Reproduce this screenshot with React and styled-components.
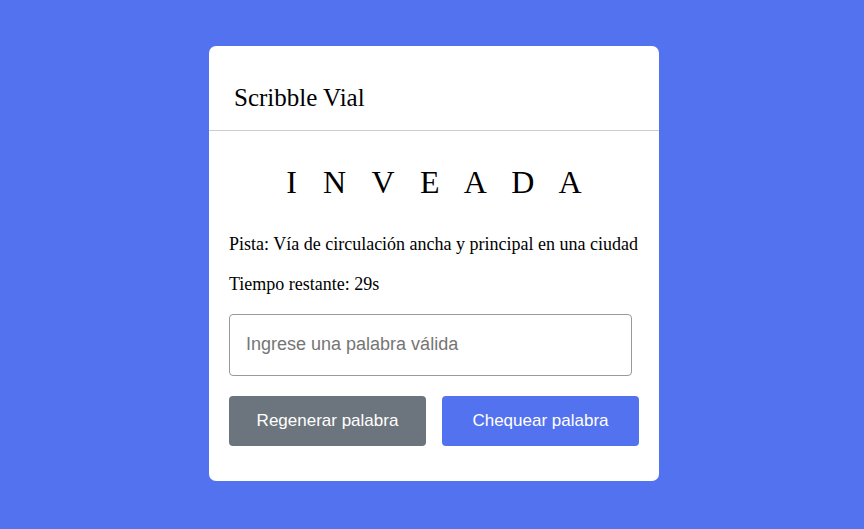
import React, { useState } from 'react';
import styled, { createGlobalStyle } from 'styled-components';

const GlobalStyle = createGlobalStyle`
  * {
    box-sizing: border-box;
  }
  body {
    margin: 0;
    background: #5372f0;
    font-family: 'Liberation Serif', 'Times New Roman', serif;
    line-height: 1.5;
    color: #000;
  }
`;

const Page = styled.div`
  display: flex;
  justify-content: center;
  align-items: flex-start;
  min-height: 529px;
  padding: 46px 0 0 4px;
`;

const Card = styled.div`
  width: 450px;
  background: #fff;
  border-radius: 7px;
`;

const Header = styled.header`
  padding: 33px 25px 13px;
  border-bottom: 1px solid #ccc;
`;

const Title = styled.h2`
  margin: 0;
  font-size: 25px;
  font-weight: 400;
`;

const Body = styled.div`
  padding: 27px 20px 35px;
`;

const Word = styled.p`
  margin: 0 0 25px;
  text-align: center;
  font-size: 32px;
  letter-spacing: 9px;
  padding-left: 9px;
`;

const Detail = styled.p`
  margin: 0 0 13px;
  font-size: 18px;
`;

const Input = styled.input`
  display: block;
  width: 403px;
  height: 62px;
  margin-top: 16px;
  padding: 0 16px;
  border: 1px solid #999;
  border-radius: 4px;
  font-family: 'Liberation Sans', Arial, sans-serif;
  font-size: 18px;
  outline: none;
  &::placeholder {
    color: #757575;
  }
`;

const Buttons = styled.div`
  display: grid;
  grid-template-columns: 1fr 1fr;
  gap: 16px;
  margin-top: 20px;
`;

const Button = styled.button`
  height: 50px;
  border: none;
  border-radius: 4px;
  background: ${({ $variant }) => ($variant === 'primary' ? '#5372f0' : '#6c757d')};
  color: #fff;
  font-family: 'Liberation Sans', Arial, sans-serif;
  font-size: 17px;
  cursor: pointer;
`;

const App = () => {
  const [value, setValue] = useState('');
  return (
    <Page>
      <GlobalStyle />
      <Card>
        <Header>
          <Title>Scribble Vial</Title>
        </Header>
        <Body>
          <Word>I N V E A D A</Word>
          <Detail>Pista: Vía de circulación ancha y principal en una ciudad</Detail>
          <Detail>Tiempo restante: 29s</Detail>
          <Input
            placeholder="Ingrese una palabra válida"
            value={value}
            onChange={e => setValue(e.target.value)}
          />
          <Buttons>
            <Button>Regenerar palabra</Button>
            <Button $variant="primary">Chequear palabra</Button>
          </Buttons>
        </Body>
      </Card>
    </Page>
  );
};

export default App;
